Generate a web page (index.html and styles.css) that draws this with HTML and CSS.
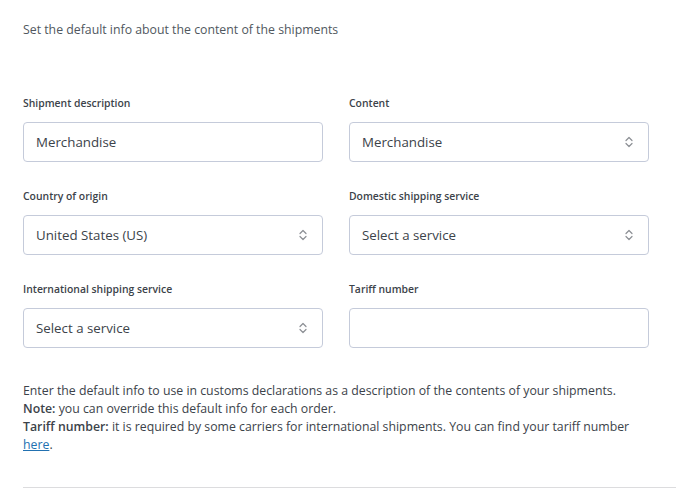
FILE: index.html
```html
<!DOCTYPE html>
<html>
<head>
<meta charset="utf-8">
<link rel="stylesheet" href="styles.css">
</head>
<body>
<div class="page">
  <p class="intro">Set the default info about the content of the shipments</p>
  <div class="grid">
    <div class="field">
      <label class="label">Shipment description</label>
      <div class="input">Merchandise</div>
    </div>
    <div class="field">
      <label class="label">Content</label>
      <div class="input select">Merchandise<svg class="chev" viewBox="0 0 10 14" width="10" height="14"><path d="M2 5.5L5 2.5L8 5.5M2 8.5L5 11.5L8 8.5" fill="none" stroke="#8c8f94" stroke-width="1.2" stroke-linecap="round" stroke-linejoin="round"/></svg></div>
    </div>
    <div class="field">
      <label class="label">Country of origin</label>
      <div class="input select">United States (US)<svg class="chev" viewBox="0 0 10 14" width="10" height="14"><path d="M2 5.5L5 2.5L8 5.5M2 8.5L5 11.5L8 8.5" fill="none" stroke="#8c8f94" stroke-width="1.2" stroke-linecap="round" stroke-linejoin="round"/></svg></div>
    </div>
    <div class="field">
      <label class="label">Domestic shipping service</label>
      <div class="input select">Select a service<svg class="chev" viewBox="0 0 10 14" width="10" height="14"><path d="M2 5.5L5 2.5L8 5.5M2 8.5L5 11.5L8 8.5" fill="none" stroke="#8c8f94" stroke-width="1.2" stroke-linecap="round" stroke-linejoin="round"/></svg></div>
    </div>
    <div class="field">
      <label class="label">International shipping service</label>
      <div class="input select">Select a service<svg class="chev" viewBox="0 0 10 14" width="10" height="14"><path d="M2 5.5L5 2.5L8 5.5M2 8.5L5 11.5L8 8.5" fill="none" stroke="#8c8f94" stroke-width="1.2" stroke-linecap="round" stroke-linejoin="round"/></svg></div>
    </div>
    <div class="field">
      <label class="label">Tariff number</label>
      <div class="input"></div>
    </div>
  </div>
  <p class="help">Enter the default info to use in customs declarations as a description of the contents of your shipments.<br><strong>Note:</strong> you can override this default info for each order.<br><strong>Tariff number:</strong> it is required by some carriers for international shipments. You can find your tariff number <a href="#">here</a>.</p>
  <div class="rule"></div>
</div>
</body>
</html>
```
FILE: styles.css
```css
html, body {
  margin: 0;
  padding: 0;
  background: #ffffff;
}
body {
  font-family: "Open Sans", "Noto Sans", sans-serif;
  color: #3c434a;
}
.page {
  padding: 21px 0 0 23px;
}
.intro {
  margin: 0;
  font-size: 12.3px;
  line-height: 18px;
  color: #50575e;
}
.grid {
  margin-top: 56px;
  display: grid;
  grid-template-columns: 300px 300px;
  column-gap: 26px;
  row-gap: 26px;
}
.field {
  display: flex;
  flex-direction: column;
}
.label {
  font-size: 10.4px;
  font-weight: 600;
  line-height: 16px;
  margin-bottom: 11px;
  color: #3c434a;
}
.input {
  box-sizing: border-box;
  height: 40px;
  border: 1px solid #c5cbda;
  border-radius: 4px;
  padding: 0 12px;
  display: flex;
  align-items: center;
  justify-content: space-between;
  font-size: 13.3px;
  color: #3c434a;
}
.chev {
  margin-right: 2px;
}
.help {
  margin: 34px 0 0 0;
  max-width: 615px;
  font-size: 12.3px;
  line-height: 18px;
  color: #3c434a;
}
.help strong {
  font-weight: 600;
}
.help a {
  color: #2271b1;
  text-decoration: underline;
}
.rule {
  margin-top: 33px;
  height: 1px;
  background: #dcdcde;
}
```
